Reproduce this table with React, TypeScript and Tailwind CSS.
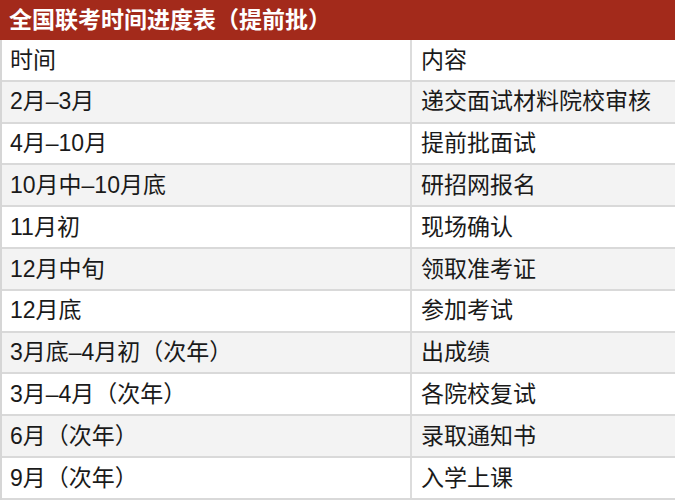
const rows: [string, string][] = [
  ['时间', '内容'],
  ['2月–3月', '递交面试材料院校审核'],
  ['4月–10月', '提前批面试'],
  ['10月中–10月底', '研招网报名'],
  ['11月初', '现场确认'],
  ['12月中旬', '领取准考证'],
  ['12月底', '参加考试'],
  ['3月底–4月初（次年）', '出成绩'],
  ['3月–4月（次年）', '各院校复试'],
  ['6月（次年）', '录取通知书'],
  ['9月（次年）', '入学上课'],
];

export default function App() {
  return (
    <div
      className="w-[675px] h-[500px] overflow-hidden bg-white text-[#1a1a1a]"
      style={{ fontFamily: '"Liberation Sans", "Noto Sans CJK SC", sans-serif' }}
    >
      <div className="h-[40px] bg-[#a32a1b] flex items-center pl-[9px] text-white text-[23px] font-bold">
        全国联考时间进度表（提前批）
      </div>
      <div className="border-l-2 border-[#d6d6d6]">
        {rows.map(([time, content], i) => (
          <div
            key={time}
            className={`flex h-[41.8px] border-b-2 border-[#d9d9d9] text-[23px] ${
              i % 2 === 1 ? 'bg-[#f3f3f3]' : 'bg-white'
            }`}
          >
            <div className="w-[410px] flex items-center pl-[8px] border-r-2 border-[#dcdcdc]">
              {time}
            </div>
            <div className="flex-1 flex items-center pl-[9px]">{content}</div>
          </div>
        ))}
      </div>
    </div>
  );
}
